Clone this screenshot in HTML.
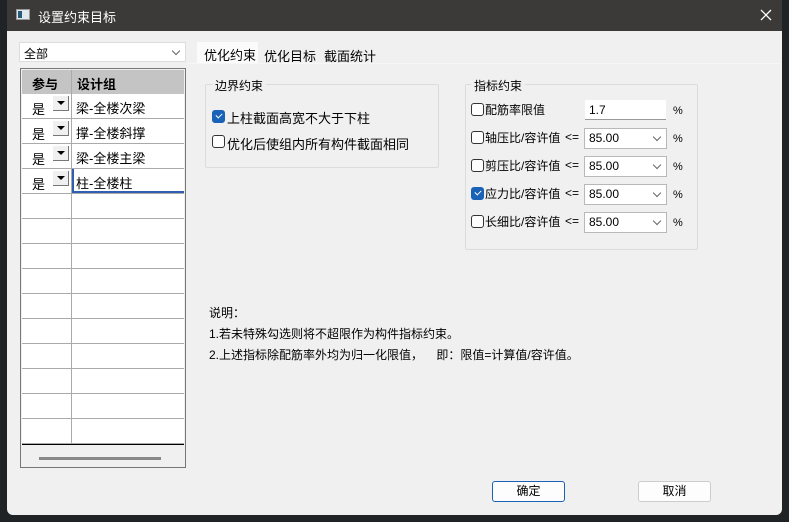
<!DOCTYPE html><html><head><meta charset="utf-8"><style>
*{box-sizing:border-box;margin:0;padding:0}
body{width:789px;height:522px;background:#1f2326;position:relative;overflow:hidden;font-family:"Liberation Sans","Noto Sans CJK SC",sans-serif;font-size:12px;color:#000}
.a{position:absolute}
.win{left:7px;top:0;width:775px;height:515px;background:#f0f0f0;border-radius:0 0 6px 6px;overflow:hidden}
.title{left:0;top:0;width:775px;height:31px;background:#3c3a38;color:#fff;font-size:13px}
.cb{width:13px;height:13px;border:1px solid #333;border-radius:3px;background:#fff}
.cb.on{background:#1a62b8;border-color:#1a62b8}
.cb.on:after{content:"";position:absolute;left:3px;top:2px;width:5px;height:3px;border-left:1.5px solid #fff;border-bottom:1.5px solid #fff;transform:rotate(-45deg)}
.sel{background:#fff;border:1px solid #b8b8b8;height:21px;padding:2px 4px;font-size:12px}
.sel .chev{position:absolute;right:6px;top:5px;width:6px;height:6px;border-right:1px solid #666;border-bottom:1px solid #666;transform:rotate(45deg)}
.grp{border:1px solid #dcdcdc;border-radius:2px}
.leg{background:#f0f0f0;padding:0 3px;font-size:12px}
.btn{height:21px;border:1px solid #ccc;border-radius:3px;background:#fdfdfd;text-align:center;line-height:19px}
</style></head><body>
<div class="a win">
 <div class="a title"><div class="a" style="left:9px;top:9px;width:14px;height:11px;background:#e0e8ee;border:1px solid #999"><div class="a" style="left:1px;top:1px;width:4px;height:7px;background:#2a5a7a"></div></div><div class="a" style="left:31px;top:7px">设置约束目标</div>
 <svg class="a" style="left:753px;top:9px" width="12" height="12"><path d="M1 1L11 11M11 1L1 11" stroke="#fff" stroke-width="1.3"/></svg></div>
 <div class="a sel" style="left:12px;top:42px;width:167px;height:20px;border-color:#ddd">全部<div class="chev"></div></div>
 <div class="a" style="left:13px;top:68px;width:166px;height:400px;border:1px solid #777;background:#f0f0f0"></div>
 <div class="a" style="left:15px;top:70px;width:162px;height:375px;background:#fff"></div>
 <div class="a" style="left:15px;top:70px;width:162px;height:24px;background:#c4c4c4;font-weight:bold;font-size:13px"><span class="a" style="left:10px;top:4px">参与</span><span class="a" style="left:55px;top:4px">设计组</span></div>
 <div class="a" style="left:64px;top:70px;width:1px;height:374px;background:#aaa"></div>
 <div class="a" style="left:15px;top:444px;width:162px;height:1px;background:#000"></div>
 <div class="a" style="left:32px;top:457px;width:122px;height:3px;background:#888"></div>
 <div id="rows"></div>
 <div class="a" style="left:190px;top:42px;width:61px;height:22px;background:#fbfbfb"></div>
 <div class="a" style="left:197px;top:45px;font-size:13px">优化约束</div>
 <div class="a" style="left:257px;top:46px;font-size:13px">优化目标</div>
 <div class="a" style="left:317px;top:46px;font-size:13px">截面统计</div>
 <div class="a" style="left:181px;top:63px;width:592px;height:1px;background:#f6f6f6"></div>
 <div class="a grp" style="left:198px;top:84px;width:234px;height:84px"></div>
 <div class="a leg" style="left:205px;top:77px">边界约束</div>
 <div class="a cb on" style="left:205px;top:110px"></div><div class="a" style="left:220px;top:108px;font-size:13px">上柱截面高宽不大于下柱</div>
 <div class="a cb" style="left:205px;top:135px"></div><div class="a" style="left:220px;top:134px;font-size:13px">优化后使组内所有构件截面相同</div>
 <div class="a grp" style="left:458px;top:84px;width:233px;height:166px"></div>
 <div class="a leg" style="left:464px;top:77px">指标约束</div>
 <div id="ind"></div>
 <div class="a" style="left:202px;top:303px;line-height:21px">说明：<br>1.若未特殊勾选则将不超限作为构件指标约束。<br>2.上述指标除配筋率外均为归一化限值，&nbsp;&nbsp;&nbsp;&nbsp;即：限值=计算值/容许值。</div>
 <div class="a btn" style="left:485px;top:481px;width:73px;border-color:#1a62b8">确定</div>
 <div class="a btn" style="left:631px;top:481px;width:73px">取消</div>
</div>
<script>
var r='',n=['梁-全楼次梁','撑-全楼斜撑','梁-全楼主梁','柱-全楼柱'];
for(var i=0;i<14;i++){var y=94+i*25;r+='<div class="a" style="left:15px;top:'+(y+24)+'px;width:162px;height:1px;background:#aaa"></div>';
if(i<4){r+='<div class="a" style="left:25px;top:'+(y+5)+'px;font-size:13px">是</div><div class="a" style="left:46px;top:'+(y+2)+'px;width:16px;height:15px;background:#f0f0f0;border-right:1px solid #777;border-bottom:1px solid #777"><div class="a" style="left:4px;top:5px;border:4px solid transparent;border-top:4px solid #000;border-bottom:0"></div></div><div class="a" style="left:69px;top:'+(y+4)+'px;font-size:13px">'+n[i]+'</div>';}}
r+='<div class="a" style="left:65px;top:169px;width:112px;height:24px;border:2px solid #2f5fb0;border-top:0;border-right:0"></div>';
document.getElementById('rows').innerHTML=r;
var s='',L=['配筋率限值','轴压比/容许值','剪压比/容许值','应力比/容许值','长细比/容许值'],Y=[110,138,166,194,222];
for(i=0;i<5;i++){var y=Y[i];s+='<div class="a cb'+(i==3?' on':'')+'" style="left:464px;top:'+(y-7)+'px"></div><div class="a" style="left:478px;top:'+(y-9)+'px;font-size:12px;white-space:nowrap">'+L[i]+'</div>';
if(i)s+='<div class="a" style="left:558px;top:'+(y-8)+'px;font-size:12px;white-space:nowrap">&lt;=</div>';
if(i==0)s+='<div class="a" style="left:578px;top:100px;width:81px;height:20px;background:#fff;border-bottom:1px solid #999;padding:3px 4px">1.7</div>';
else s+='<div class="a sel" style="left:577px;top:'+(y-10)+'px;width:83px">85.00<div class="chev"></div></div>';
s+='<div class="a" style="left:666px;top:'+(y-5)+'px;font-size:11px">%</div>';}
document.getElementById('ind').innerHTML=s;
</script>
</body></html>
